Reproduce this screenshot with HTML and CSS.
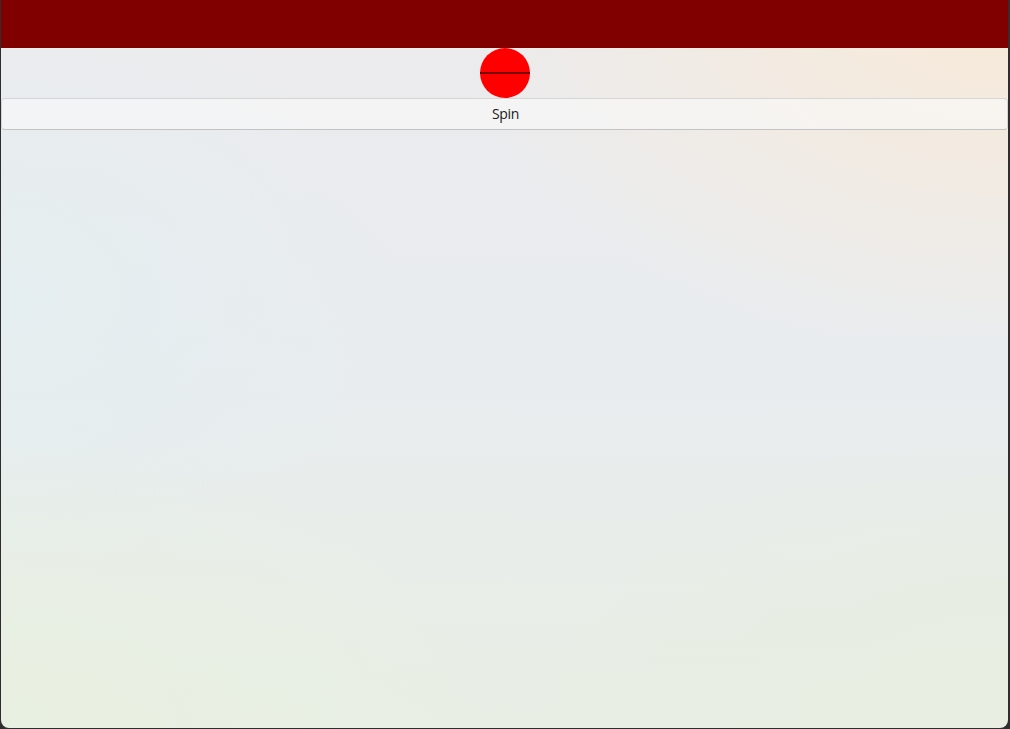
FILE: index.html
```html
<!DOCTYPE html>
<html>
<head>
<meta charset="utf-8">
<link rel="stylesheet" href="styles.css">
</head>
<body>
<div class="window">
  <div class="titlebar"></div>
  <div class="content">
    <div class="spinner"><div class="spinner-line"></div></div>
    <button class="spin-btn">Spin</button>
  </div>
</div>
</body>
</html>
```
FILE: styles.css
```css
html, body {
  margin: 0;
  padding: 0;
  width: 1010px;
  height: 729px;
  background: #2e2e2e;
  overflow: hidden;
}
.window {
  margin: 0 2px 0 1px;
  height: 728px;
  border-radius: 0 0 8px 8px;
  overflow: hidden;
  display: flex;
  flex-direction: column;
  background:
    radial-gradient(ellipse 55% 50% at 100% 0%, rgba(248,234,216,1), rgba(248,234,216,0) 100%),
    radial-gradient(ellipse 50% 40% at 0% 100%, rgba(232,240,224,0.9), rgba(232,240,224,0) 100%),
    radial-gradient(ellipse 50% 40% at 100% 100%, rgba(232,238,224,0.9), rgba(232,238,224,0) 100%),
    radial-gradient(ellipse 40% 40% at 0% 40%, rgba(228,238,240,0.9), rgba(228,238,240,0) 100%),
    linear-gradient(180deg, #ecebed 0%, #e8ecef 50%, #e8eee4 100%);
}
.titlebar {
  height: 48px;
  background: #800000;
  flex: none;
}
.content {
  display: flex;
  flex-direction: column;
  align-items: center;
}
.spinner {
  width: 50px;
  height: 50px;
  border-radius: 50%;
  background: #ff0000;
  display: flex;
  align-items: center;
}
.spinner-line {
  width: 100%;
  height: 2px;
  background: #7a0000;
  margin-top: -1px;
}
.spin-btn {
  align-self: stretch;
  height: 32px;
  box-sizing: border-box;
  border: 1px solid #d6d6d6;
  border-bottom-color: #c2c2c2;
  border-radius: 4px;
  background: rgba(250,250,250,0.6);
  font-family: "Segoe UI", "Open Sans", "Noto Sans", sans-serif;
  font-size: 14px;
  letter-spacing: -0.3px;
  color: #1a1a1a;
  padding: 0 0 2px 2px;
  margin: 0;
}
```
